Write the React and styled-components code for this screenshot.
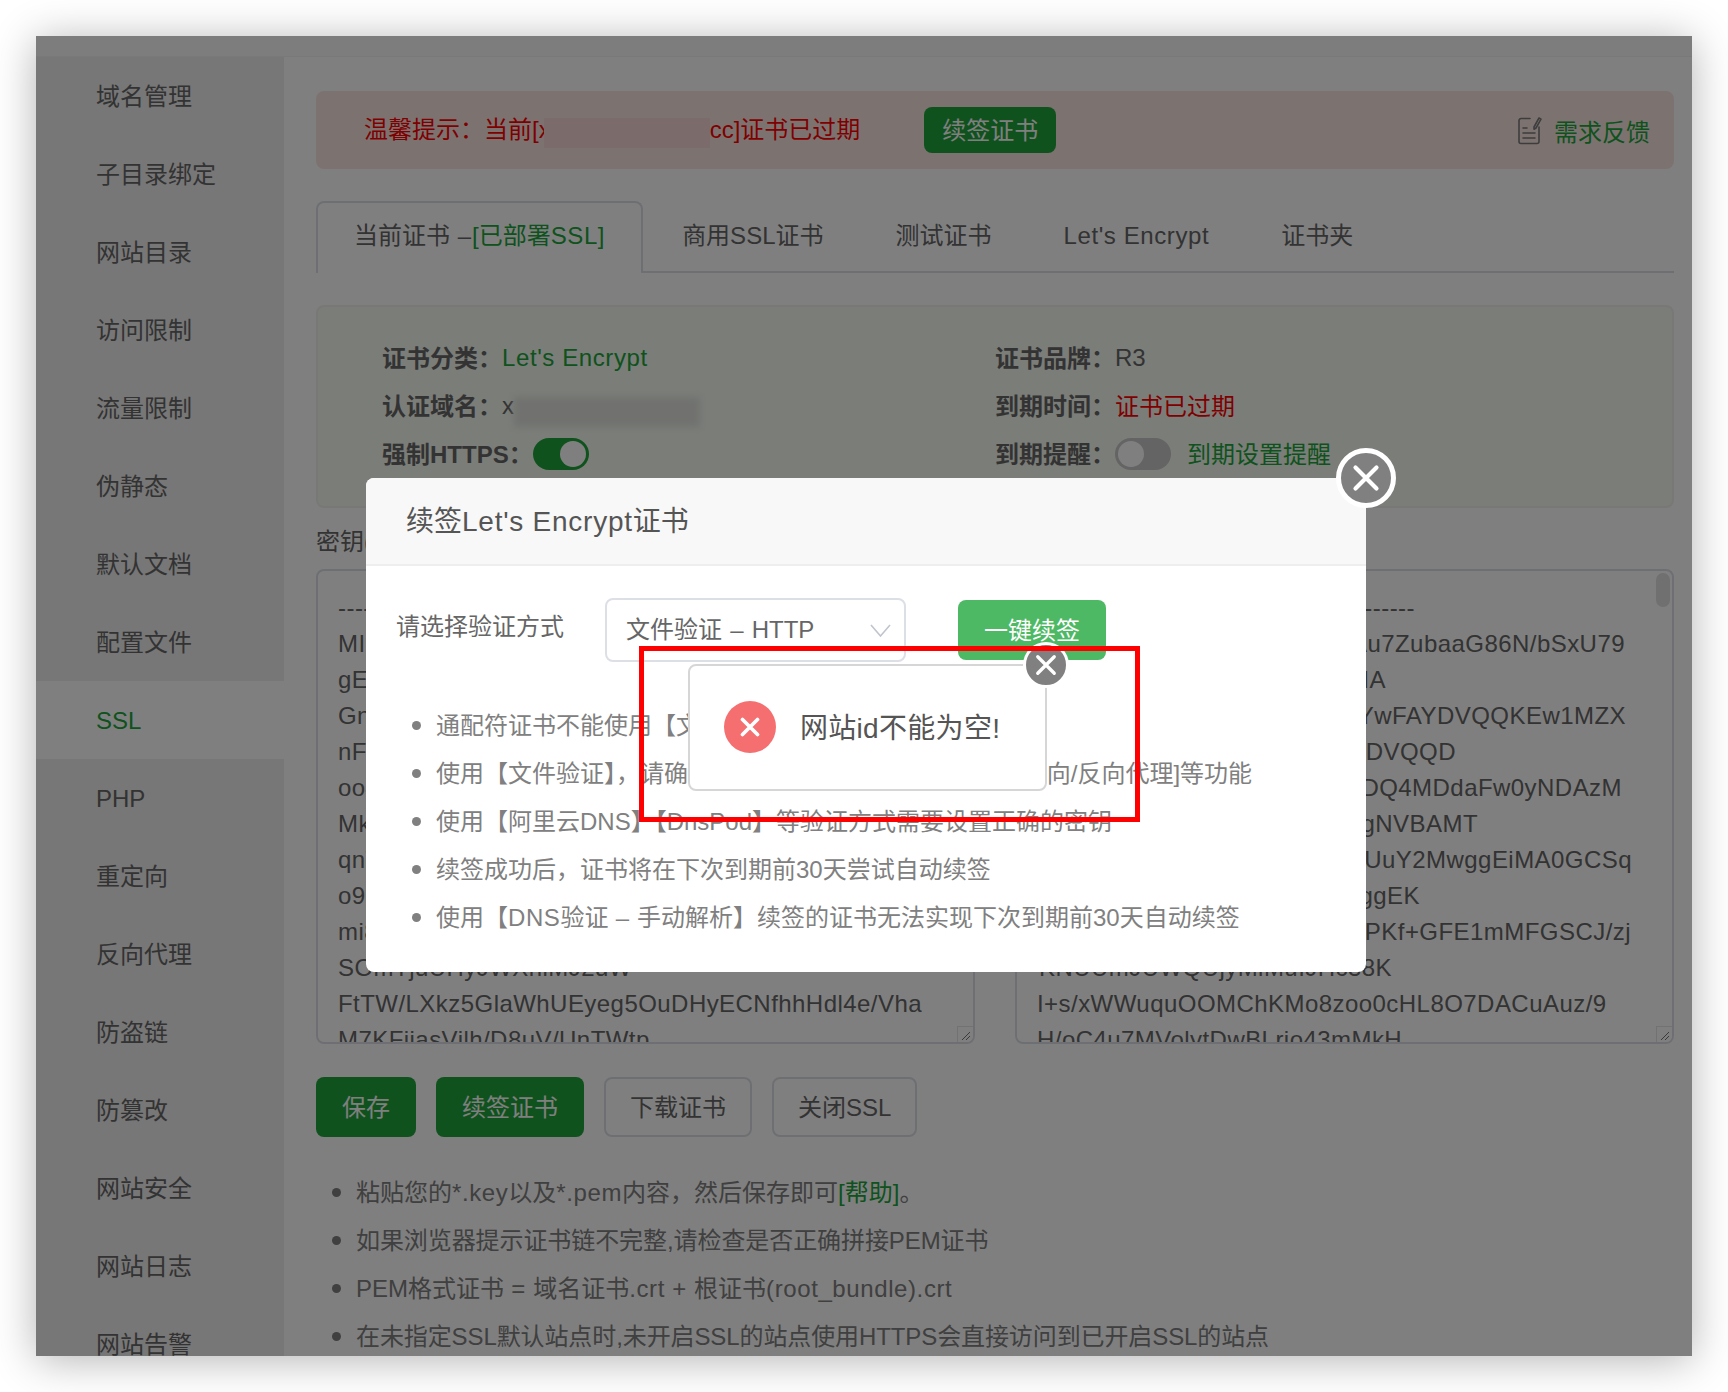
import React from 'react';
import styled, { createGlobalStyle } from 'styled-components';

const Global = createGlobalStyle`
  html, body { margin: 0; padding: 0; background: #fff; }
  body { font-family: "Liberation Sans", "Noto Sans CJK SC", sans-serif; font-size: 24px; color: #666; }
  * { box-sizing: border-box; }
`;

const Stage = styled.div`
  width: 1728px;
  height: 1392px;
  padding: 36px;
  background: #fff;
  overflow: hidden;
`;
const Window = styled.div`
  position: relative;
  width: 1656px;
  height: 1320px;
  overflow: hidden;
  background: #fff;
  display: flex;
  flex-direction: column;
`;
const WindowShadow = styled.div`
  width: 1656px;
  height: 1320px;
  box-shadow: 0 4px 40px rgba(0, 0, 0, 0.3);
`;
const TopBar = styled.div`
  flex: 0 0 21px;
  background: #fafafa;
  border-bottom: 1px solid #f2f2f2;
`;
const Body = styled.div`
  flex: 1;
  display: flex;
  min-height: 0;
`;
const Sidebar = styled.nav`
  flex: 0 0 248px;
  background: #eeeeee;
  overflow: hidden;
`;
const NavItem = styled.div`
  height: 78px;
  line-height: 80px;
  padding-left: 60px;
  color: ${p => (p.$active ? '#20a53a' : '#666')};
  background: ${p => (p.$active ? '#fff' : 'transparent')};
`;
const Main = styled.main`
  flex: 1;
  min-width: 0;
  padding: 34px 18px 0 32px;
  overflow: hidden;
`;
const Latin = styled.span`
  letter-spacing: 0.6px;
`;
const Alert = styled.div`
  height: 78px;
  border-radius: 8px;
  background: #f9e6e3;
  display: flex;
  align-items: center;
  padding-left: 48px;
  padding-right: 24px;
  color: #ff0000;
`;
const AlertText = styled.span`
  display: flex;
  align-items: center;
  white-space: nowrap;
  padding-bottom: 6px;
`;
const AlertMask = styled.span`
  width: 166px;
  height: 30px;
  margin-left: -7px;
  margin-top: 12px;
  background: #f8d6d6;
  position: relative;
`;
const FillButton = styled.div`
  display: flex;
  align-items: center;
  justify-content: center;
  background: #20a53a;
  color: #fff;
  border-radius: 8px;
  flex: none;
  padding-bottom: 4px;
`;
const AlertButton = styled(FillButton)`
  width: 132px;
  height: 46px;
  margin-left: 64px;
`;
const Feedback = styled.div`
  margin-left: auto;
  display: flex;
  align-items: center;
  gap: 12px;
  color: #20a53a;
`;
const Tabs = styled.div`
  height: 72px;
  margin-top: 32px;
  display: flex;
  border-bottom: 2px solid #dcdfe6;
`;
const Tab = styled.div`
  height: 72px;
  padding: 0 36px;
  line-height: 69px;
  white-space: nowrap;
  color: #666;
  &:nth-child(2) { margin-left: 3px; }
`;
const ActiveTab = styled(Tab)`
  background: #fff;
  line-height: 66px;
  border: 2px solid #dcdfe6;
  border-bottom: none;
  border-radius: 8px 8px 0 0;
`;
const TabDash = styled.span`
  letter-spacing: 1px;
`;
const Green = styled.span`
  color: #20a53a;
`;
const InfoPanel = styled.section`
  margin-top: 32px;
  height: 203px;
  border: 2px solid #f0f3ed;
  border-radius: 8px;
  background: #f6faf2;
  padding: 27px 0 0 64px;
  display: grid;
  grid-template-columns: 613px 1fr;
  grid-auto-rows: 48px;
`;
const InfoRow = styled.div`
  display: flex;
  align-items: center;
  white-space: nowrap;
`;
const InfoLabel = styled.span`
  font-weight: 600;
  padding-bottom: 4px;
`;
const Expired = styled.span`
  color: #ff0000;
  padding-bottom: 4px;
`;
const NameMask = styled.span`
  width: 186px;
  height: 30px;
  margin-top: 12px;
  background: #e2e5df;
  filter: blur(3px);
`;
const Toggle = styled.span`
  display: inline-flex;
  width: 56px;
  height: 32px;
  padding: 3px;
  border-radius: 16px;
  background: ${p => (p.$on ? '#20a53a' : '#c8c8c8')};
  justify-content: ${p => (p.$on ? 'flex-end' : 'flex-start')};
  flex: none;
`;
const Knob = styled.span`
  width: 26px;
  height: 26px;
  border-radius: 50%;
  background: #fff;
`;
const ToggleNote = styled.span`
  color: #20a53a;
  margin-left: 16px;
  padding-bottom: 4px;
`;
const KeyGrid = styled.div`
  display: grid;
  grid-template-columns: 659px 659px;
  column-gap: 40px;
  margin-top: 8px;
`;
const KeyColumn = styled.div``;
const KeyTitle = styled.div`
  height: 53px;
  line-height: 51px;
  color: #666;
`;
const KeyBox = styled.div`
  position: relative;
  height: 475px;
  border: 2px solid #dcdfe6;
  border-radius: 8px;
  padding: 19px 20px 0;
  line-height: 36px;
  overflow: hidden;
  background: #fff;
  color: #666;
  letter-spacing: 0.45px;
`;
const KeyLine = styled.div`
  height: 36px;
  white-space: nowrap;
  display: flex;
  justify-content: ${p => (p.$end ? 'flex-end' : 'flex-start')};
`;
const ScrollThumb = styled.div`
  position: absolute;
  top: 2px;
  right: 2px;
  width: 14px;
  height: 34px;
  border-radius: 7px;
  background: #e0e0e0;
`;
const Resizer = styled.div`
  position: absolute;
  right: 0;
  bottom: 0;
  width: 16px;
  height: 16px;
  background: #fff;
  border-left: 1px solid #e4e4e4;
  border-top: 1px solid #e4e4e4;
  display: flex;
`;
const Actions = styled.div`
  display: flex;
  gap: 20px;
  margin-top: 33px;
`;
const SolidAction = styled(FillButton)`
  height: 60px;
  padding: 0 26px 4px;
`;
const GhostAction = styled.div`
  height: 60px;
  padding: 0 24px 4px;
  display: flex;
  align-items: center;
  border: 2px solid #dcdfe6;
  border-radius: 8px;
  color: #666;
  background: #fff;
`;
const Notes = styled.div`
  margin-top: 29px;
  margin-left: 16px;
`;
const NoteRow = styled.div`
  height: 48px;
  display: flex;
  align-items: center;
  white-space: nowrap;
  gap: 15px;
  color: #808080;
  letter-spacing: ${p => p.$track || 0}px;
`;
const Dot = styled.span`
  width: 9px;
  height: 9px;
  margin-top: 4px;
  border-radius: 50%;
  background: #808080;
  flex: none;
`;
const Overlay = styled.div`
  position: absolute;
  inset: 0;
  background: rgba(0, 0, 0, 0.5);
`;
const Modal = styled.div`
  position: absolute;
  left: 330px;
  top: 442px;
  width: 1000px;
  height: 494px;
  background: #fff;
  border-radius: 8px;
`;
const ModalHeader = styled.div`
  height: 88px;
  padding-left: 40px;
  line-height: 88px;
  font-size: 28px;
  color: #555;
  background: #f8f8f8;
  border-bottom: 2px solid #eeeeee;
  border-radius: 8px 8px 0 0;
`;
const TitleLatin = styled.span`
  letter-spacing: 0.75px;
`;
const CircleClose = styled.div`
  position: absolute;
  border-radius: 50%;
  background: #808080;
  border: solid #fff;
  display: flex;
  align-items: center;
  justify-content: center;
`;
const ModalClose = styled(CircleClose)`
  right: -30px;
  top: -30px;
  width: 60px;
  height: 60px;
  border-width: 5px;
`;
const FormRow = styled.div`
  display: flex;
  align-items: flex-start;
  padding: 32px 0 0 30px;
`;
const FormLabel = styled.div`
  width: 209px;
  height: 64px;
  line-height: 58px;
  color: #666;
`;
const SelectBox = styled.div`
  width: 301px;
  height: 64px;
  border: 2px solid #dcdfe6;
  border-radius: 8px;
  padding: 0 13px 0 19px;
  display: flex;
  align-items: center;
  justify-content: space-between;
  color: #666;
`;
const SelectValue = styled.span`
  word-spacing: 1.5px;
  padding-bottom: 6px;
`;
const RenewButton = styled(FillButton)`
  width: 148px;
  height: 60px;
  margin: 2px 0 0 52px;
  background: #4eb965;
`;
const TipList = styled.div`
  margin: 37px 0 0 46px;
`;
const Toast = styled.div`
  position: absolute;
  left: 652px;
  top: 628px;
  width: 359px;
  height: 127px;
  background: #fff;
  border: 2px solid #d6d6d6;
  border-radius: 8px;
  display: flex;
  align-items: center;
  padding-left: 34px;
  gap: 24px;
  font-size: 28px;
  color: #555;
  white-space: nowrap;
`;
const ToastText = styled.span`
  padding-bottom: 4px;
  letter-spacing: 0.3px;
`;
const ToastIcon = styled.span`
  width: 52px;
  height: 52px;
  margin-bottom: 2px;
  border-radius: 50%;
  background: #f56f70;
  display: flex;
  align-items: center;
  justify-content: center;
  flex: none;
`;
const ToastClose = styled(CircleClose)`
  right: -24px;
  top: -24px;
  width: 46px;
  height: 46px;
  border-width: 3px;
`;
const RedFrame = styled.div`
  position: absolute;
  left: 603px;
  top: 610px;
  width: 501px;
  height: 176px;
  border: 5.5px solid #ff0000;
  pointer-events: none;
`;

const Cross = ({ size, width }) => (
  <svg width={size} height={size} viewBox="0 0 24 24" fill="none" stroke="#fff" strokeWidth={width} strokeLinecap="round">
    <path d="M3 3 L21 21 M21 3 L3 21" />
  </svg>
);

const FeedbackIcon = () => (
  <svg width="24" height="29" viewBox="0 0 24 29" fill="none" stroke="#7a7a7a" strokeWidth="1.6" strokeLinecap="round" strokeLinejoin="round">
    <path d="M12 2.5 H3 a2 2 0 0 0 -2 2 V25.5 a2 2 0 0 0 2 2 H19 a2 2 0 0 0 2 -2 V11" />
    <path d="M16 11 L21 2 L23 3.2 L18 12 L16 13.2 Z" />
    <path d="M5 12 H9 M5 17 H17 M5 22 H17" />
  </svg>
);

const ResizeGrip = () => (
  <Resizer>
    <svg width="14" height="14" viewBox="0 0 14 14" stroke="#777" strokeWidth="1"><path d="M4 13 L12 5 M8 13 L12 9" /></svg>
  </Resizer>
);

const navItems = ['域名管理', '子目录绑定', '网站目录', '访问限制', '流量限制', '伪静态', '默认文档', '配置文件', 'SSL', 'PHP', '重定向', '反向代理', '防盗链', '防篡改', '网站安全', '网站日志', '网站告警'];

const keyLines = [
  '-----BEGIN RSA PRIVATE KEY-----',
  'MIIEpAIBAAKCAQEAyV3k8Zr0mQ2',
  'gEHnYpL7d1TxQb9vKs4Rj6Ua',
  'Gn2WcMf8oXe5PzTqLy3BhN',
  'nFa7KdR1uVs9GiJw0TmC',
  'oo4XtEb6HqZl2NyPc8Dr',
  'Mk9ShVf3AjUw7LgOe1Qn',
  'qnT5RbY2KxIm8ZpGd4Cv',
  'o9Lu6NsWa1FhJt3XeVk7',
  'mi8PzDq0GcRy5BoHl2Ms',
  'SOmTjdUHyJWXhiMJ2dW',
  'FtTW/LXkz5GlaWhUEyeg5OuDHyECNfhhHdl4e/Vha',
  'M7KFijasVilh/D8uV/UnTWtp',
];

const certLines = [
  ['-----BEGIN CERTIFICATE------', 378],
  ['MIIFLTCCBBWgAwIBAgISAu7ZubaaG86N/bSxU79', 588],
  ['BQAwMjELMAkGA1UEBhMCVVMxFjAUBgNVBAIA', 349],
  ['MAkGA1UEBhMCVVMxFjYwFAYDVQQKEw1MZX', 589],
  ['dCBFbmNyeXB0MQswCQYDVQQDEwYDVQQD', 419],
  ['MjIwMzE4MDQ4MDQ4MDQ4MDdaFw0yNDAzM', 585],
  ['MDQ4MDdaMBkxFzAVBgNVBAMT', 441],
  ['eGluZ2NoZW5nLmNjMIIBIjUuY2MwggEiMA0GCSq', 595],
  ['hkiG9w0BAQEFAAOCAQ8AMIIBCggEK', 383],
  ['AoIBAQDLxV8qZ3nRtPKf+GFE1mMFGSCJ/zj', 594],
  ['KNUUmJUWQUjyMiMuIJHc38K', 355],
];

export default function App() {
  return (
    <Stage>
      <Global />
      <WindowShadow>
        <Window>
          <TopBar />
          <Body>
            <Sidebar>
              {navItems.map(item => (
                <NavItem key={item} $active={item === 'SSL'}>{item}</NavItem>
              ))}
            </Sidebar>
            <Main>
              <Alert>
                <AlertText>
                  温馨提示：当前[x<AlertMask />cc]证书已过期
                </AlertText>
                <AlertButton>续签证书</AlertButton>
                <Feedback>
                  <FeedbackIcon />
                  需求反馈
                </Feedback>
              </Alert>
              <Tabs>
                <ActiveTab>当前证书<TabDash> –</TabDash><Green>[已部署<Latin>SSL]</Latin></Green></ActiveTab>
                <Tab>商用SSL证书</Tab>
                <Tab>测试证书</Tab>
                <Tab><Latin>Let's Encrypt</Latin></Tab>
                <Tab>证书夹</Tab>
              </Tabs>
              <InfoPanel>
                <InfoRow><InfoLabel>证书分类：</InfoLabel><Green><Latin>Let's Encrypt</Latin></Green></InfoRow>
                <InfoRow><InfoLabel>证书品牌：</InfoLabel>R3</InfoRow>
                <InfoRow><InfoLabel>认证域名：</InfoLabel>x<NameMask /></InfoRow>
                <InfoRow><InfoLabel>到期时间：</InfoLabel><Expired>证书已过期</Expired></InfoRow>
                <InfoRow><InfoLabel>强制HTTPS：</InfoLabel><Toggle $on><Knob /></Toggle></InfoRow>
                <InfoRow><InfoLabel>到期提醒：</InfoLabel><Toggle><Knob /></Toggle><ToggleNote>到期设置提醒</ToggleNote></InfoRow>
              </InfoPanel>
              <KeyGrid>
                <KeyColumn>
                  <KeyTitle>密钥(KEY)</KeyTitle>
                  <KeyBox>
                    {keyLines.map(line => <KeyLine key={line}>{line}</KeyLine>)}
                    <ResizeGrip />
                  </KeyBox>
                </KeyColumn>
                <KeyColumn>
                  <KeyTitle>证书(PEM格式)</KeyTitle>
                  <KeyBox>
                    {certLines.map(([line, end]) => (
                      <KeyLine key={line} $end style={{ width: end }}>{line}</KeyLine>
                    ))}
                    <KeyLine>I+s/xWWuquOOMChKMo8zoo0cHL8O7DACuAuz/9</KeyLine>
                    <KeyLine>H/oC4u7MVolytDwBLrio43mMkH</KeyLine>
                    <ScrollThumb />
                    <ResizeGrip />
                  </KeyBox>
                </KeyColumn>
              </KeyGrid>
              <Actions>
                <SolidAction>保存</SolidAction>
                <SolidAction>续签证书</SolidAction>
                <GhostAction>下载证书</GhostAction>
                <GhostAction>关闭SSL</GhostAction>
              </Actions>
              <Notes>
                <NoteRow><Dot /><span>粘贴您的<Latin>*.key</Latin>以及<Latin>*.pem</Latin>内容，然后保存即可<Green>[帮助]</Green>。</span></NoteRow>
                <NoteRow $track={-0.08}><Dot /><span>如果浏览器提示证书链不完整,请检查是否正确拼接PEM证书</span></NoteRow>
                <NoteRow><Dot /><span>PEM格式证书<Latin> = </Latin>域名证书<Latin>.crt + </Latin>根证书<Latin>(root_bundle).crt</Latin></span></NoteRow>
                <NoteRow $track={-0.1}><Dot /><span>在未指定SSL默认站点时,未开启SSL的站点使用HTTPS会直接访问到已开启SSL的站点</span></NoteRow>
              </Notes>
            </Main>
          </Body>
          <Overlay />
          <Modal>
            <ModalHeader>续签<TitleLatin>Let's Encrypt</TitleLatin>证书</ModalHeader>
            <ModalClose><Cross size={28} width={3.6} /></ModalClose>
            <FormRow>
              <FormLabel>请选择验证方式</FormLabel>
              <SelectBox>
                <SelectValue>文件验证 – HTTP</SelectValue>
                <svg width="21" height="13" viewBox="0 0 21 13" fill="none" stroke="#c0c4cc" strokeWidth="1.6"><path d="M1 1 L10.5 12 L20 1" /></svg>
              </SelectBox>
              <RenewButton>一键续签</RenewButton>
            </FormRow>
            <TipList>
              <NoteRow><Dot /><span>通配符证书不能使用【文件验证】，请选择DNS验证</span></NoteRow>
              <NoteRow><Dot /><span>使用【文件验证】，请确保站点可正常访问未开启[301重定向/反向代理]等功能</span></NoteRow>
              <NoteRow><Dot /><span>使用【阿里云DNS】【DnsPod】等验证方式需要设置正确的密钥</span></NoteRow>
              <NoteRow><Dot /><span>续签成功后，证书将在下次到期前30天尝试自动续签</span></NoteRow>
              <NoteRow><Dot /><span>使用【<Latin>DNS</Latin>验证<Latin> – </Latin>手动解析】续签的证书无法实现下次到期前30天自动续签</span></NoteRow>
            </TipList>
          </Modal>
          <Toast>
            <ToastIcon><Cross size={20} width={4.4} /></ToastIcon>
            <ToastText>网站id不能为空!</ToastText>
            <ToastClose><Cross size={22} width={3.6} /></ToastClose>
          </Toast>
          <RedFrame />
        </Window>
      </WindowShadow>
    </Stage>
  );
}
